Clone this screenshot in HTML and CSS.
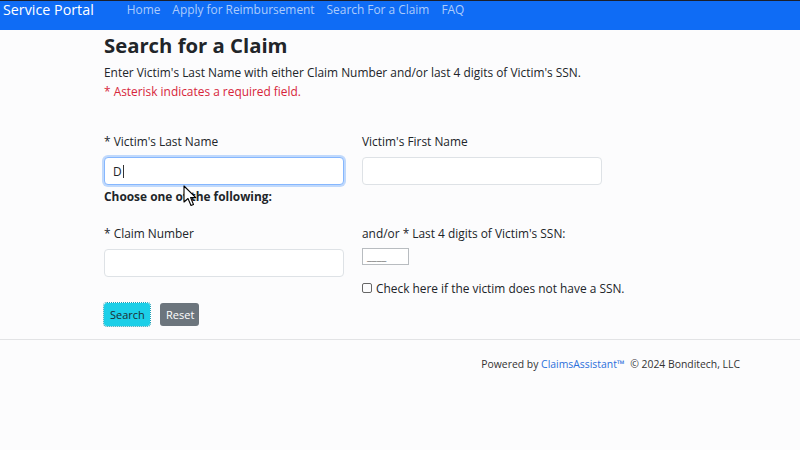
FILE: index.html
```html
<!DOCTYPE html>
<html lang="en">
<head>
<meta charset="utf-8">
<title>Search for a Claim</title>
<link rel="stylesheet" href="styles.css">
</head>
<body>
<nav class="navbar">
  <a class="brand" href="#">Service Portal</a>
  <ul class="nav-links">
    <li><a href="#">Home</a></li>
    <li><a href="#">Apply for Reimbursement</a></li>
    <li><a href="#" class="active">Search For a Claim</a></li>
    <li><a href="#">FAQ</a></li>
  </ul>
</nav>
<main class="container">
  <h1 class="title">Search for a Claim</h1>
  <p class="intro">Enter Victim's Last Name with either Claim Number and/or last 4 digits of Victim's SSN.</p>
  <p class="required-note">* Asterisk indicates a required field.</p>
  <form class="claim-form">
    <div class="row row-names">
      <div class="field">
        <label class="label">* Victim's Last Name</label>
        <div class="input focused">D<span class="caret"></span></div>
      </div>
      <div class="field">
        <label class="label">Victim's First Name</label>
        <div class="input"></div>
      </div>
    </div>
    <div class="choose">Choose one of the following:</div>
    <div class="row row-ids">
      <div class="field">
        <label class="label">* Claim Number</label>
        <div class="input"></div>
      </div>
      <div class="field">
        <label class="label">and/or * Last 4 digits of Victim's SSN:</label>
        <div class="ssn-input">____</div>
        <div class="check-line"><span class="checkbox"></span>Check here if the victim does not have a SSN.</div>
      </div>
    </div>
    <div class="buttons">
      <button type="button" class="btn btn-search">Search</button>
      <button type="button" class="btn btn-reset">Reset</button>
    </div>
  </form>
</main>
<footer class="footer">
  <span>Powered by <a href="#" class="footer-link">ClaimsAssistant™</a>&nbsp; © 2024 Bonditech, LLC</span>
</footer>
<svg class="pointer" width="15" height="22" viewBox="0 0 15 22">
  <path d="M1 1 L1 17 L5 13.5 L8 20.5 L10.5 19.5 L7.6 12.6 L12.8 12.6 Z" fill="#fff" stroke="#000" stroke-width="1.1" stroke-linejoin="round"/>
</svg>
</body>
</html>
```
FILE: styles.css
```css
* { box-sizing: border-box; }
html, body { margin: 0; padding: 0; }
body {
  background: #fcfcfd;
  color: #212529;
  font-family: "Open Sans", "Noto Sans", sans-serif;
  font-size: 11.9px;
  width: 800px;
  height: 450px;
  overflow: hidden;
  position: relative;
}
a { text-decoration: none; }

.navbar {
  height: 30px;
  background: #0f6cf5;
  border-top: 1px solid #1b1f2a;
  display: flex;
  align-items: flex-start;
  padding-left: 3px;
}
.brand {
  color: #fff;
  font-size: 14.3px;
  line-height: 18px;
}
.nav-links {
  list-style: none;
  margin: 0 0 0 33px;
  padding: 0;
  display: flex;
  gap: 12px;
}
.nav-links a {
  color: rgba(255,255,255,0.66);
  font-size: 11.9px;
  line-height: 17px;
}

.container {
  width: 592px;
  margin: 0 auto;
}
.title {
  margin: 2px 0 0;
  font-size: 20.3px;
  line-height: 26px;
  font-weight: 700;
}
.intro, .required-note {
  margin: 0;
  line-height: 19px;
}
.intro { margin-top: 5px; }
.required-note { color: #d7263a; }

.claim-form { margin-top: 30px; }
.row {
  display: grid;
  grid-template-columns: 240px 240px;
  column-gap: 18px;
}
.field { display: flex; flex-direction: column; align-items: flex-start; }
.label { line-height: 20px; }
.input {
  margin-top: 6px;
  width: 240px;
  height: 28px;
  border: 1px solid #dee2e6;
  border-radius: 4px;
  background: #fff;
  padding: 0 8px;
  line-height: 26px;
  display: flex;
  align-items: center;
}
.input.focused {
  border-color: #86b7fe;
  box-shadow: 0 0 0 2px rgba(13,110,253,0.25);
}
.caret {
  display: inline-block;
  width: 1px;
  height: 13px;
  background: #333;
  margin-left: 1px;
}
.choose {
  margin-top: 2px;
  font-weight: 700;
  line-height: 19px;
}
.row-ids { margin-top: 17px; }
.ssn-input {
  margin-top: 5px;
  width: 47px;
  height: 17px;
  border: 1px solid #b8bcc0;
  background: #fff;
  color: #777;
  font-size: 11px;
  line-height: 14px;
  padding-left: 4px;
}
.check-line {
  margin-top: 13px;
  line-height: 20px;
  display: flex;
  align-items: center;
  white-space: nowrap;
}
.checkbox {
  display: inline-block;
  width: 10px;
  height: 10px;
  border: 1px solid #666;
  border-radius: 2px;
  margin-right: 4px;
}
.buttons {
  margin-top: 5px;
  display: flex;
  gap: 10px;
}
.btn {
  height: 23px;
  border: none;
  border-radius: 3px;
  font-family: inherit;
  font-size: 11px;
  padding: 0 6px;
}
.btn-search { background: #1ccfe8; color: #1d2c30; width: 46px; outline: 1px dotted #1a9fb5; }
.btn-reset { background: #6c757d; color: #fff; width: 39px; }

.footer {
  margin-top: 13px;
  border-top: 1px solid #e2e3e5;
  padding-top: 14px;
  padding-right: 60px;
  text-align: right;
  line-height: 20px;
  font-size: 10.4px;
  color: #333;
}
.footer-link { color: #2a6fdb; }

.pointer {
  position: absolute;
  left: 183px;
  top: 185px;
}
```
